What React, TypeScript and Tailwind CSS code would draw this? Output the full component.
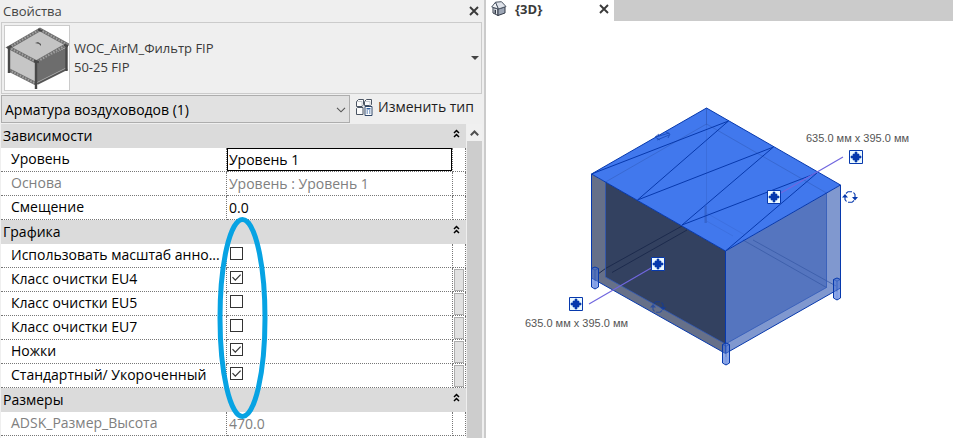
import { Fragment } from "react";

type Row = {
  label: string;
  text?: string;
  checked?: boolean;
  readOnly?: boolean;
  active?: boolean;
  linkable?: boolean;
};

const groups: { title: string; rows: Row[] }[] = [
  {
    title: "Зависимости",
    rows: [
      { label: "Уровень", text: "Уровень 1", active: true },
      { label: "Основа", text: "Уровень : Уровень 1", readOnly: true },
      { label: "Смещение", text: "0.0" },
    ],
  },
  {
    title: "Графика",
    rows: [
      { label: "Использовать масштаб анно...", checked: false },
      { label: "Класс очистки EU4", checked: true, linkable: true },
      { label: "Класс очистки EU5", checked: false, linkable: true },
      { label: "Класс очистки EU7", checked: false, linkable: true },
      { label: "Ножки", checked: true, linkable: true },
      { label: "Стандартный/ Укороченный", checked: true, linkable: true },
    ],
  },
  {
    title: "Размеры",
    rows: [{ label: "ADSK_Размер_Высота", text: "470.0", readOnly: true }],
  },
];

export default function App() {
  return (
    <div className="flex h-screen overflow-hidden bg-white font-['Open_Sans','Noto_Sans',sans-serif] text-[#1e1e1e]">
      <PropertiesPanel />
      <main className="flex min-w-0 flex-1 flex-col">
        <ViewTabs />
        <ModelView />
      </main>
    </div>
  );
}

function PropertiesPanel() {
  return (
    <aside className="relative flex w-[486px] shrink-0 flex-col border-r-2 border-[#cbcbcb] bg-[#efefef] pr-0.5 pl-px">
      <header className="flex h-[22px] items-center justify-between pr-0.5 pl-0.5">
        <h1 className="text-[13px] leading-5 text-[#444]">Свойства</h1>
        <button type="button" aria-label="Закрыть" className="grid size-3 place-items-center">
          <CloseIcon />
        </button>
      </header>

      <button
        type="button"
        className="flex h-[72px] shrink-0 items-center border border-[#cbcbcb] pr-0.5 pl-0.5 text-left text-[13px] leading-[19px] text-[#3a3a3a]"
      >
        <span className="mr-1 grid size-[66px] place-items-center border border-[#cbcbcb] bg-white">
          <TypeThumbnail />
        </span>
        <span className="flex-1">
          WOC_AirM_Фильтр FIP
          <br />
          50-25 FIP
        </span>
        <svg className="h-1 w-2" viewBox="0 0 8 4" aria-hidden="true">
          <path d="M0 0h8L4 4z" fill="#444" />
        </svg>
      </button>

      <div className="mt-px mb-px flex h-7 shrink-0 items-center">
        <div className="relative h-7 w-[349px]">
          <select
            aria-label="Категория"
            className="block h-7 w-full appearance-none border border-[#adadad] bg-[#e1e1e1] px-[3px] text-[14px] text-black"
          >
            <option>Арматура воздуховодов (1)</option>
          </select>
          <svg className="pointer-events-none absolute top-3 right-1 h-[6px] w-[10px]" viewBox="0 0 10 6" fill="none" aria-hidden="true">
            <path d="M1 .8l4 4 4-4" stroke="#555" strokeWidth="1.1" />
          </svg>
        </div>
        <button type="button" className="mb-1 ml-1.5 flex items-center gap-[5px] text-[14px] leading-5 text-[#1e1e1e]">
          <EditTypeIcon />
          Изменить тип
        </button>
      </div>

      <div className="flex min-h-0 flex-1">
        <div className="min-w-0 flex-1 overflow-hidden bg-white">
          <PropertiesTable />
        </div>
        <div className="ml-px flex w-[15px] flex-col bg-[#cdcdcd]">
          <button type="button" aria-label="Вверх" className="grid h-[17px] place-items-center bg-[#f0f0f0]">
            <svg className="h-[6px] w-[9px]" viewBox="0 0 9 6" fill="none" aria-hidden="true">
              <path d="M.8 5.2l3.7-3.7 3.7 3.7" stroke="#505050" strokeWidth="2" />
            </svg>
          </button>
        </div>
      </div>

      <svg className="pointer-events-none absolute top-[216px] left-[216px] h-[204px] w-[52px]" viewBox="216 216 52 204" fill="none" aria-hidden="true">
        <ellipse cx="242.5" cy="318" rx="22.5" ry="98.5" stroke="#07a3e3" strokeWidth="5" />
      </svg>
    </aside>
  );
}

function PropertiesTable() {
  return (
    <table className="w-full table-fixed border-separate border-spacing-0 text-left text-[14px] leading-[22px] text-black">
      <colgroup>
        <col />
        <col className="w-[226px]" />
        <col className="w-[13px]" />
      </colgroup>
      <tbody>
        {groups.map((group) => (
          <Fragment key={group.title}>
            <tr className="h-6 bg-[#dbdbdb]">
              <th colSpan={3} scope="colgroup" className="h-6 p-0 font-normal">
                <div className="flex items-start justify-between pr-1.5 pl-0.5">
                  {group.title}
                  <button type="button" aria-label="Свернуть" className="mt-1">
                    <CollapseIcon />
                  </button>
                </div>
              </th>
            </tr>
            {group.rows.map((row) => (
              <PropertyRow key={row.label} row={row} />
            ))}
          </Fragment>
        ))}
      </tbody>
    </table>
  );
}

function PropertyRow({ row }: { row: Row }) {
  const tone = row.readOnly ? "text-[#808080]" : "text-black";
  return (
    <tr className={`h-6 align-top ${tone}`}>
      <th scope="row" className="h-6 truncate border-r border-b border-dotted border-[#777] py-0 pr-0 pl-2.5 font-normal">
        {row.label}
      </th>
      <td className="h-6 border-r border-b border-dotted border-[#777] p-0">
        {row.text === undefined ? (
          <span className="relative mt-[3px] ml-[3px] block size-[13px]">
            <input
              type="checkbox"
              aria-label={row.label}
              defaultChecked={row.checked}
              className="peer block size-[13px] appearance-none border border-[#333] bg-white"
            />
            <svg className="pointer-events-none absolute inset-0 hidden size-[13px] peer-checked:block" viewBox="0 0 13 13" fill="none" aria-hidden="true">
              <path d="M2.5 6.2l2.8 2.9 5.3-5.5" stroke="#333" strokeWidth="1.2" />
            </svg>
          </span>
        ) : (
          <input
            type="text"
            aria-label={row.label}
            defaultValue={row.text}
            readOnly={row.readOnly}
            className={`block h-[23px] w-full border bg-transparent px-px pb-px outline-none ${row.active ? "border-black" : "border-transparent"}`}
          />
        )}
      </td>
      <td className="h-6 border-r border-b border-dotted border-[#777] p-0">
        {row.linkable && (
          <button type="button" aria-label="Связать параметр" className="mx-auto mt-px block h-[22px] w-2.5 border border-[#adadad] bg-[#e1e1e1]" />
        )}
      </td>
    </tr>
  );
}

function ViewTabs() {
  return (
    <nav className="flex h-[21px] shrink-0 bg-[#cbcbcb]">
      <div className="flex w-32 items-center bg-white pr-1 pb-1 pl-[5px]">
        <HomeIcon />
        <a href="#view-3d" className="ml-2 flex-1 text-[13px] leading-4 font-bold text-[#3a3a3a]">
          {"{3D}"}
        </a>
        <button type="button" aria-label="Закрыть вид" className="grid size-3 place-items-center">
          <CloseIcon />
        </button>
      </div>
    </nav>
  );
}

function ModelView() {
  return (
    <svg className="block aspect-[467/417] w-full" viewBox="486 21 467 417" fill="none" role="img" aria-label="3D">
      {/* faces */}
      <g>
        <path d="M591.5 174L725.5 251V353.5L591.5 278z" fill="#667089" />
        <path d="M605.5 182L725.5 251V344L605.5 277z" fill="#334160" />
        <path d="M725.5 251L840.5 185V288L725.5 353.5z" fill="#8098cf" />
        <path d="M725.5 251L826.5 193V287.5L725.5 344z" fill="#5575bf" />
        <path d="M706.5 108L840.5 185L725.5 251L591.5 174z" fill="#4178ed" />
      </g>

      {/* hidden edges */}
      <g stroke="#3059b8" strokeWidth="1">
        <path d="M605.5 182L706.5 124L826.5 193" opacity=".5" />
        <path d="M706.5 108V125" opacity=".7" />
        <path d="M706.5 125V223" opacity=".3" />
        <path d="M705.5 206V223" strokeWidth="2" opacity=".6" />
        <path d="M706.5 213L745 235M706.5 221L733 236" opacity=".25" />
        <path d="M743 240L826.5 287.5M753 240L836 286" stroke="#3a5ba8" opacity=".8" />
        <path d="M598 274L605.5 268.5L682 226M612 272.5L687 230" stroke="#1d2b4d" />
        <path d="M605.5 182V277L725.5 344L826.5 287.5V193" opacity=".8" />
      </g>

      {/* visible edges */}
      <g stroke="#0739ad" strokeWidth="1">
        <path d="M706.5 108L840.5 185L725.5 251L591.5 174z" />
        <path d="M591.5 174V278L725.5 353.5L840.5 288V185M725.5 251V353" />
        <path d="M591.5 174L728.5 121L637.5 200L773.5 147L682 225L817 173L725.5 251" />
      </g>

      <Leg x={591.5} y={267} />
      <Leg x={722.5} y={343} />
      <Leg x={833.5} y={278} />

      {/* flip arrows on the top face */}
      <path
        d="M656 137l13-4M666 132l4 2-2 4M669 135l-12 5M659 134l-4 3 5 3"
        stroke="#1747b5"
        opacity=".8"
      />

      <path d="M774 197L843 157M589 304L658 264" stroke="#7167df" strokeWidth="1.2" />
      <Connector x={856} y={157} />
      <Connector x={774} y={197} />
      <Connector x={658} y={264} />
      <Connector x={576} y={304} />
      <Rotate x={850} y={197} />
      <g opacity=".6">
        <Rotate x={658} y={307} />
      </g>

      <g fill="#555" fontFamily="Liberation Sans, Arial, sans-serif" fontSize="11">
        <text x="806" y="142">635.0 мм x 395.0 мм</text>
        <text x="525" y="327">635.0 мм x 395.0 мм</text>
      </g>
    </svg>
  );
}

function Leg({ x, y }: { x: number; y: number }) {
  return (
    <g transform={`translate(${x} ${y})`} stroke="#0739ad" strokeWidth="1">
      <path d="M0 1.5L3.5 0 7 1.5V20L3.5 22 0 20z" fill="#4c75d4" fillOpacity=".6" />
      <path d="M0 1.5L3.5 3 7 1.5M3.5 3V22" strokeOpacity=".4" />
      <path d="M1 14h5v6l-2.5 1L1 20z" fill="#86a2ea" stroke="none" opacity=".7" />
    </g>
  );
}

function Connector({ x, y }: { x: number; y: number }) {
  return (
    <g transform={`translate(${x} ${y})`}>
      <path d="M-6.5-6.5h13v13h-13z" fill="#ecf9ff" stroke="#0739ad" />
      <path d="M-1-5h2v2h2v2h2v2H3v2H1v2h-2V3h-2V1h-2v-2h2v-2h2z" fill="#0739ad" stroke="#0739ad" strokeWidth=".6" />
    </g>
  );
}

function Rotate({ x, y }: { x: number; y: number }) {
  return (
    <g transform={`translate(${x} ${y})`} stroke="#0739ad" strokeWidth="1.1">
      <path d="M-4-3.5L-2-5.3H2M3.5-4.5L5-2.5V1M4 3.5L2 5.3H-2M-3.500 4.500L-5 2.500V0" />
      <path d="M2 0h6L5 3.500zM-8 .500h6l-3-3.500z" fill="#0739ad" stroke="none" />
    </g>
  );
}

function CloseIcon() {
  return (
    <svg className="size-[10px]" viewBox="0 0 10 10" fill="none" aria-hidden="true">
      <path d="M1 1l8 8M9 1L1 9" stroke="#3a3a3a" strokeWidth="1.9" />
    </svg>
  );
}

function CollapseIcon() {
  return (
    <svg className="block h-[9px] w-[7px]" viewBox="0 0 7 9" fill="none" aria-hidden="true">
      <path d="M1 4l2.5-2.5L6 4M1 8l2.5-2.5L6 8" stroke="#000" strokeWidth="1.5" />
    </svg>
  );
}

function EditTypeIcon() {
  return (
    <svg className="h-[17px] w-[17px]" viewBox="0 0 17 17" fill="none" aria-hidden="true">
      <g fill="#fbfbfb" stroke="#4b5563" strokeWidth="1">
        <path d="M.5 2.5l2-2h5v5l-1.5 2H.5z" />
        <path d="M8.5 2.5l2-2h5v5l-1 1h-6z" />
        <path d="M.5 9.5l1-1h5.5v7H.5z" />
        <path d="M1 2.500h5v4.500M9 2.500h5v4" stroke="#c3c7cd" />
      </g>
      <path d="M9 7.5h7v9H9z" fill="#fff" stroke="#2f4668" />
      <path d="M10.5 9h4v1.5h-4z" fill="#2f5f9f" />
      <path d="M10.5 12h1.5M13 12h1.5M10.5 14h1.5M13 14h1.5" stroke="#2f5f9f" />
    </svg>
  );
}

function HomeIcon() {
  return (
    <svg className="h-[15px] w-[16px]" viewBox="0 0 16 15" fill="none" aria-hidden="true">
      <path d="M2 6.5L7 8v6.500L2 12z" fill="#e4e7ec" stroke="#333b48" />
      <path d="M7 8l7-2v6l-7 2.5z" fill="#9da6b5" stroke="#333b48" />
      <path d="M.7 6L4.5 1.200 7.500 8z" fill="#f2f4f7" stroke="#4b5563" />
      <path d="M4.5 1.200L10.500.7 15 5.500 7.500 8z" fill="#dfe3ea" stroke="#4b5563" />
      <path d="M3.5 8.500l1.500.5v4l-1.500-.7z" fill="#333b48" />
    </svg>
  );
}

function TypeThumbnail() {
  return (
    <svg className="size-16" viewBox="4 26 64 64" fill="none" aria-hidden="true">
      <path d="M8 48l28 14v22L8 70z" fill="#c6c6c6" />
      <path d="M36 62l30-15v22L36 84z" fill="#6d6d6d" />
      <path d="M8 48l31-19 27 18-30 15z" fill="#c4c4c4" />
      <g stroke="#6f6f6f" strokeWidth="3.5">
        <path d="M8 47.5l31-18 27 15-30.5 17.5z" />
        <path d="M8 70l27.5 14" />
      </g>
      <g stroke="#a2a2a2" strokeWidth="2" strokeDasharray="1.5 1.5">
        <path d="M8 47.5l31-18 27 15-30.5 17.5z" />
        <path d="M8 70l27.5 14" />
      </g>
      <path d="M36 83.5l30-15" stroke="#555" strokeWidth="3" />
      <path d="M36 82.5l30-15" stroke="#aaa" strokeWidth="1" />
      <path d="M8 47v26M35 61v28M65.5 45v26" stroke="#484848" strokeWidth="2.4" />
      <path d="M6.5 48l4-2M37 29.5l4 1.5M33 61l5 1M63 45l4 1" stroke="#484848" strokeWidth="2.400" />
      <path d="M34 43l3-1 3 2v2l-2-2z" fill="#555" />
    </svg>
  );
}
